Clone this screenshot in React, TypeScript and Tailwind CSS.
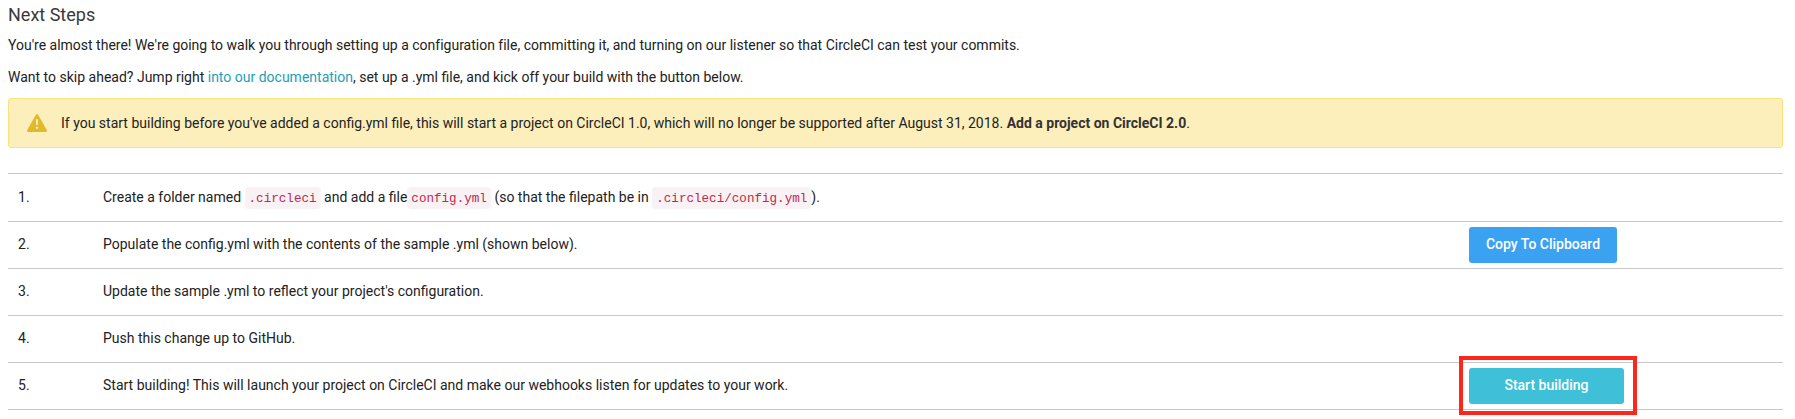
import type { ReactNode } from "react";

function Code({ children }: { children: ReactNode }) {
  return (
    <code className="inline-block h-[22px] rounded-[4px] bg-[#f8f2f4] px-1 font-['Liberation_Mono',monospace] text-[12.6px] leading-[25px] text-[#c7254e]">
      {children}
    </code>
  );
}

function Row({ n, children, action, first = false }: { n: number; children: ReactNode; action?: ReactNode; first?: boolean }) {
  return (
    <li className={`flex items-center border-b border-[#c9c9c9] ${first ? "h-12" : "h-[47px]"}`}>
      <span className={`w-[95px] shrink-0 pl-[10px] ${first ? "" : "pb-px"}`}>{n}.</span>
      <div className={`w-[1366px] shrink-0 whitespace-nowrap ${first ? "" : "pb-px"}`}>{children}</div>
      {action}
    </li>
  );
}

export default function App() {
  return (
    <main className="h-[419px] overflow-hidden bg-white pr-3 pl-2 font-['Roboto',sans-serif] text-[14px] leading-[21px] text-[#222]">
      <h1 className="h-[30px] text-[18px] leading-[30px] text-[#393939]">Next Steps</h1>
      <p className="h-8 leading-[30px] tracking-[-0.005px] whitespace-nowrap [font-variant-ligatures:common-ligatures]">
        You're almost there! We're going to walk you through setting up a configuration file, committing it, and turning on our listener so that CircleCI can test your commits.
      </p>
      <p className="h-9 leading-[30px] whitespace-nowrap">
        Want to skip ahead? Jump right <a className="text-[#229fb8]">into our documentation</a>, set up a .yml file, and kick off your build with the button below.
      </p>
      <div className="flex h-[50px] items-center rounded-[3px] border border-[#fbe27b] bg-[#fdefbc] pl-[18px]">
        <svg className="mr-[14px] shrink-0" width="20" height="18" viewBox="0 0 20 18">
          <path
            d="M8.9.7a1.3 1.3 0 0 1 2.2 0l8.7 15.4a1.3 1.3 0 0 1-1.1 1.9H1.3a1.3 1.3 0 0 1-1.1-1.9z"
            fill="#e2b92b"
          />
          <path d="M9 5.2h2v5.6H9zM9 12.7h2v2H9z" fill="#fdefbc" />
        </svg>
        <span className="whitespace-nowrap">
          If you start building before you've added a config.yml file, this will start a project on CircleCI 1.0, which will no longer be supported after August 31, 2018. <b className="font-bold text-[#333]">Add a project on CircleCI 2.0</b>.
        </span>
      </div>
      <ol className="mt-[25px] border-t border-[#c9c9c9]">
        <Row n={1} first>
          Create a folder named <Code>.circleci</Code> and add a file
          <Code>config.yml</Code> (so that the filepath be in <Code>.circleci/config.yml</Code>).
        </Row>
        <Row
          n={2}
          action={
            <button className="h-9 w-[148px] rounded-[3px] bg-[#3ba2f2] pb-px font-medium text-white">Copy To Clipboard</button>
          }
        >
          Populate the config.yml with the contents of the sample .yml (shown below).
        </Row>
        <Row n={3}>Update the sample .yml to reflect your project's configuration.</Row>
        <Row n={4}>Push this change up to GitHub.</Row>
        <Row
          n={5}
          action={
            <div className="relative">
              <button className="block h-9 w-[155px] rounded-[3px] bg-[#3ec0d8] pb-px font-medium text-white">Start building</button>
              <div className="absolute -top-3 -left-[10px] h-[59px] w-[178px] border-4 border-[#fd261b]" />
            </div>
          }
        >
          Start building! This will launch your project on CircleCI and make our webhooks listen for updates to your work.
        </Row>
      </ol>
    </main>
  );
}
